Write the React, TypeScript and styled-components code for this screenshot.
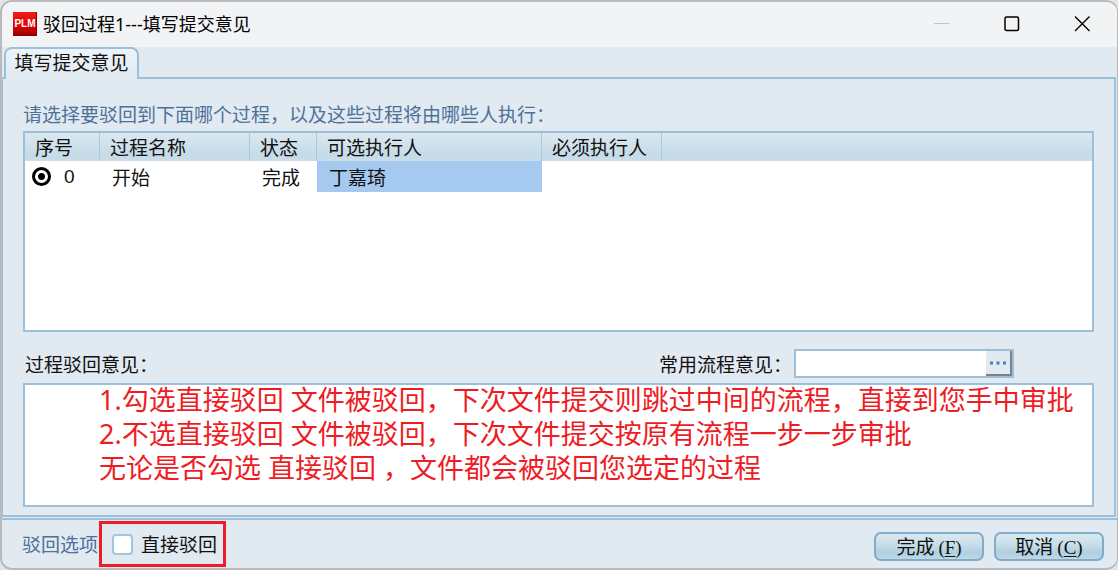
import React from "react";
import styled, { createGlobalStyle, css } from "styled-components";

const line = "#9dc0da";
const face = "#e1e9f1";
const blueText = "#4d7299";

const GlobalStyle = createGlobalStyle`
  * { box-sizing: border-box; }
  body {
    margin: 0;
    background: #e3e4e6;
    color: #111;
    font-family: "Noto Sans CJK SC", sans-serif;
    font-size: 19px;
    line-height: 24px;
  }
  button, input, textarea { font: inherit; color: inherit; margin: 0; }
`;

const Window = styled.div`
  display: flex;
  flex-direction: column;
  min-height: 100vh;
  border: 2px solid #b8babc;
  border-right-width: 1px;
  border-radius: 12px;
  overflow: hidden;
  background: ${face};
`;

const TitleBar = styled.header`
  display: flex;
  align-items: center;
  height: 45px;
  padding: 0 0 2px 11px;
  background: #f2f3f5;
`;

const Title = styled.h1`
  flex: 1;
  margin: 0 0 0 6px;
  font-family: "Noto Sans", "Noto Sans CJK SC", sans-serif;
  font-size: 18px;
  font-weight: 400;
  color: #000;
`;

const CaptionButton = styled.button`
  display: flex;
  align-items: center;
  justify-content: center;
  width: 70px;
  height: 43px;
  padding: 0;
  border: 0;
  background: none;
`;

const TabStrip = styled.div`
  display: flex;
  padding-left: 2px;
`;

const Tab = styled.button`
  position: relative;
  z-index: 1;
  height: 32px;
  margin-bottom: -2px;
  padding: 0 8px 4px;
  width: 135px;
  white-space: nowrap;
  border: 2px solid ${line};
  border-bottom: 0;
  border-radius: 8px 8px 0 0;
  background: linear-gradient(#edf3f8, ${face});
`;

const Panel = styled.main`
  flex: 1;
  display: flex;
  flex-direction: column;
  margin-right: 1px;
  padding: 23px 20px 8px;
  border: 2px solid ${line};
  border-left-width: 1px;
`;

const Prompt = styled.p`
  margin: 0 0 5px;
  color: ${blueText};
`;

const ListBox = styled.div`
  height: 201px;
  border: 2px solid ${line};
  background: #fff;
`;

const Grid = styled.table`
  width: 100%;
  table-layout: fixed;
  border-collapse: separate;
  border-spacing: 0;
`;

const HeadCell = styled.th<{ $last?: boolean }>`
  height: 28px;
  padding: 0 0 0 10px;
  text-align: left;
  font-weight: 400;
  white-space: nowrap;
  background: linear-gradient(#dbe8f0, #c5dbe7 80%, #c9deea);
  border-right: ${(p) => (p.$last ? "0" : "1px solid #a9cade")};
`;

const Cell = styled.td<{ $selected?: boolean }>`
  height: 31px;
  padding: 0 0 0 12px;
  background: ${(p) => (p.$selected ? "#a6c9f0" : "#fff")};
`;

const RowPick = styled.label`
  display: flex;
  align-items: center;
  gap: 13px;
  margin-left: -5px;
`;

const Radio = styled.input`
  appearance: none;
  width: 19px;
  height: 19px;
  border: 3px solid #000;
  border-radius: 50%;
  background: radial-gradient(circle, #000 3px, #fff 4px);
`;

const Digit = styled.span`
  font-family: "Liberation Sans", sans-serif;
`;

const OpinionBar = styled.div`
  display: flex;
  align-items: center;
  justify-content: space-between;
  margin: 17px 80px 5px 2px;
`;

const Picker = styled.div`
  display: flex;
  align-items: center;
  gap: 2px;
`;

const PickerField = styled.div`
  display: flex;
  width: 220px;
  height: 29px;
  border: 2px solid ${line};
  background: #fff;
`;

const PickerInput = styled.input`
  flex: 1;
  min-width: 0;
  padding: 0 4px;
  border: 0;
  outline: 0;
  background: transparent;
`;

const BrowseButton = styled.button`
  display: flex;
  align-items: center;
  justify-content: center;
  width: 26px;
  padding: 0;
  border: 0 solid #7e8388;
  border-width: 0 2px 2px 0;
  background: ${face};
`;

const OpinionArea = styled.div`
  position: relative;
  flex: 1;
  display: flex;
  min-height: 124px;
`;

const OpinionText = styled.textarea`
  flex: 1;
  resize: none;
  border: 2px solid ${line};
  outline: 0;
  background: #fff;
`;

const Note = styled.div`
  position: absolute;
  top: 0;
  left: 76px;
  color: #ee1c24;
  font-family: "Noto Sans", "Noto Sans CJK SC", sans-serif;
  font-size: 27px;
  line-height: 34px;
  white-space: nowrap;
  pointer-events: none;
`;

const NoteLine = styled.p`
  margin: 0;
`;

const Footer = styled.footer`
  display: flex;
  align-items: center;
  height: 50px;
  margin-top: 1px;
  padding: 0 13px 0 20px;
  border-top: 2px solid ${line};
`;

const FooterCaption = styled.span`
  color: ${blueText};
  width: 77px;
  white-space: nowrap;
`;

const Highlight = styled.label`
  display: flex;
  align-items: center;
  gap: 8px;
  width: 127px;
  height: 46px;
  padding-left: 10px;
  border: 3px solid #ee1c24;
  white-space: nowrap;
`;

const CheckBox = styled.input`
  appearance: none;
  flex: none;
  width: 21px;
  height: 21px;
  border: 2px solid #a5c5dd;
  border-radius: 4px;
  background: #fff;
  &:checked { background: #6f9fc4; }
`;

const Actions = styled.div`
  display: flex;
  gap: 10px;
  margin: 4px 0 0 auto;
`;

const ActionButton = styled.button`
  width: 110px;
  height: 29px;
  padding: 0;
  border: 2px solid #80abc9;
  border-radius: 7px;
  background: linear-gradient(#dbe9f1, #c6dde8 45%, #b0cfdf 75%, #bfd9e6);
  line-height: 24px;
`;

const Shortcut = styled.span`
  padding-left: 4px;
  font-family: "Liberation Serif", serif;
  u { text-underline-offset: 2px; }
`;

const Col = styled.col<{ $w?: number }>`
  ${(p) => p.$w && css`width: ${p.$w}px;`}
`;

const columns = [
  { name: "序号", width: 75 },
  { name: "过程名称", width: 150 },
  { name: "状态", width: 67 },
  { name: "可选执行人", width: 225 },
  { name: "必须执行人", width: 120 },
  { name: "", width: undefined },
];

function Logo() {
  return (
    <svg width="24" height="24" viewBox="0 0 24 24" aria-hidden="true">
      <defs>
        <linearGradient id="logoRed" x1="0" y1="0" x2="0" y2="1">
          <stop offset="0" stopColor="#f21c1c" />
          <stop offset="0.6" stopColor="#e00000" />
          <stop offset="1" stopColor="#930000" />
        </linearGradient>
      </defs>
      <rect width="24" height="24" fill="url(#logoRed)" />
      <path d="M23.5 0V23.5H0" fill="none" stroke="#8a0000" />
      <text x="12" y="15" textAnchor="middle" fill="#fff" fontFamily="Liberation Sans, sans-serif" fontWeight="700" fontSize="10">PLM</text>
    </svg>
  );
}

export default function App() {
  return (
    <>
      <GlobalStyle />
      <Window>
        <TitleBar>
          <Logo />
          <Title>驳回过程1---填写提交意见</Title>
          <CaptionButton aria-label="最小化" disabled>
            <svg width="16" height="16"><path d="M0 7.5H15" stroke="#c2c4c6" /></svg>
          </CaptionButton>
          <CaptionButton aria-label="最大化">
            <svg width="16" height="16"><rect x="1" y="1" width="13.5" height="13.5" rx="1.5" fill="none" stroke="#000" strokeWidth="1.5" /></svg>
          </CaptionButton>
          <CaptionButton aria-label="关闭">
            <svg width="16" height="16"><path d="M1 .5L15.500 15M15.500 .5L1 15" stroke="#000" strokeWidth="1.4" /></svg>
          </CaptionButton>
        </TitleBar>
        <TabStrip role="tablist">
          <Tab role="tab" aria-selected="true">填写提交意见</Tab>
        </TabStrip>
        <Panel>
          <Prompt>请选择要驳回到下面哪个过程，以及这些过程将由哪些人执行：</Prompt>
          <ListBox>
            <Grid>
              <colgroup>
                {columns.map((c, i) => <Col key={i} $w={c.width} />)}
              </colgroup>
              <thead>
                <tr>
                  {columns.map((c, i) => (
                    <HeadCell key={i} $last={i === columns.length - 1}>{c.name}</HeadCell>
                  ))}
                </tr>
              </thead>
              <tbody>
                <tr>
                  <Cell>
                    <RowPick>
                      <Radio type="radio" name="step" defaultChecked />
                      <Digit>0</Digit>
                    </RowPick>
                  </Cell>
                  <Cell>开始</Cell>
                  <Cell>完成</Cell>
                  <Cell $selected>丁嘉琦</Cell>
                  <Cell />
                  <Cell />
                </tr>
              </tbody>
            </Grid>
          </ListBox>
          <OpinionBar>
            <label htmlFor="opinion">过程驳回意见：</label>
            <Picker>
              <label htmlFor="common">常用流程意见：</label>
              <PickerField>
                <PickerInput id="common" type="text" />
                <BrowseButton aria-label="选择">
                  <svg width="16" height="4"><path d="M0 .5h3v3H0zM6.500 .5h3v3h-3zM13 .5h3v3h-3z" fill="#4a80b5" /></svg>
                </BrowseButton>
              </PickerField>
            </Picker>
          </OpinionBar>
          <OpinionArea>
            <OpinionText id="opinion" />
            <Note>
              <NoteLine>1.勾选直接驳回 文件被驳回，下次文件提交则跳过中间的流程，直接到您手中审批</NoteLine>
              <NoteLine>2.不选直接驳回 文件被驳回，下次文件提交按原有流程一步一步审批</NoteLine>
              <NoteLine>无论是否勾选 直接驳回 ，文件都会被驳回您选定的过程</NoteLine>
            </Note>
          </OpinionArea>
        </Panel>
        <Footer>
          <FooterCaption>驳回选项</FooterCaption>
          <Highlight>
            <CheckBox type="checkbox" />
            直接驳回
          </Highlight>
          <Actions>
            <ActionButton>完成<Shortcut>(<u>F</u>)</Shortcut></ActionButton>
            <ActionButton>取消<Shortcut>(<u>C</u>)</Shortcut></ActionButton>
          </Actions>
        </Footer>
      </Window>
    </>
  );
}
